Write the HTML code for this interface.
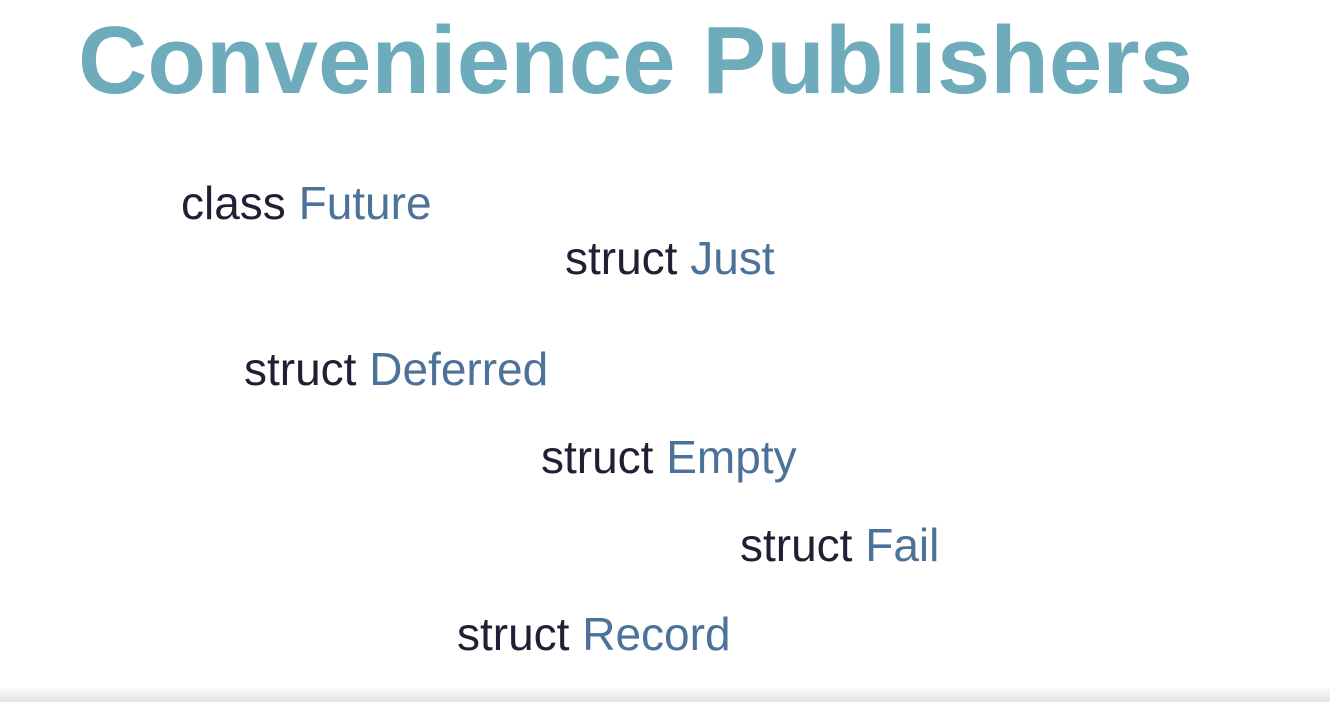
<!DOCTYPE html>
<html><head><meta charset="utf-8"><style>
html,body{margin:0;padding:0;}
body{width:1330px;height:702px;position:relative;overflow:hidden;background:#fff;font-family:"Liberation Sans",sans-serif;}
.t{position:absolute;left:78px;top:13px;font-size:96px;line-height:1;font-weight:bold;color:#6eacbb;letter-spacing:0;white-space:nowrap;}
.l{position:absolute;font-size:46px;line-height:1;color:#1f2035;white-space:nowrap;}
.l span{color:#4d7299;}
.bar{position:absolute;left:0;right:0;top:688px;height:14px;background:linear-gradient(#fafafa,#e4e4e4);}
</style></head><body>
<div class="t">Convenience Publishers</div>
<div class="l" style="left:181px;top:180px">class <span>Future</span></div>
<div class="l" style="left:565px;top:235px">struct <span>Just</span></div>
<div class="l" style="left:244px;top:346px">struct <span>Deferred</span></div>
<div class="l" style="left:541px;top:434px">struct <span>Empty</span></div>
<div class="l" style="left:740px;top:522px">struct <span>Fail</span></div>
<div class="l" style="left:457px;top:611px">struct <span>Record</span></div>
<div class="bar"></div>
</body></html>
